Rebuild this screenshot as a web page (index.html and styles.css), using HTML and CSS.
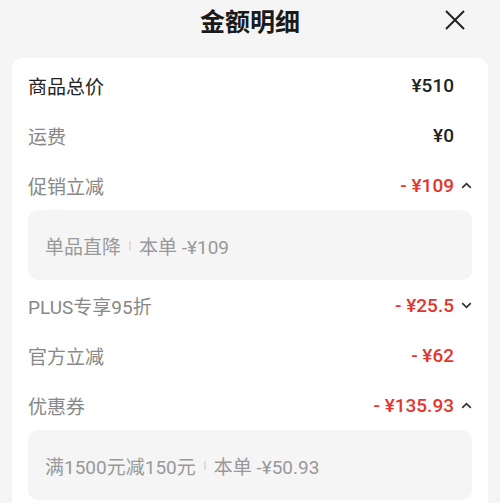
FILE: index.html
```html
<!DOCTYPE html>
<html lang="zh-CN">
  <head>
    <meta charset="UTF-8" />
    <meta name="viewport" content="width=device-width, initial-scale=1.0"/>
    <title>金额明细</title>
    <link rel="stylesheet" href="styles.css">
  </head>
  <body>
    <header class="sheet-header">
      <h1>金额明细</h1>
      <span class="close-btn">
        <svg width="22" height="22" viewBox="0 0 22 22"><path d="M2 2 L20 20 M20 2 L2 20" stroke="#222" stroke-width="2" fill="none"/></svg>
      </span>
    </header>

    <div class="card">
      <div class="row">
        <span class="label strong">商品总价</span>
        <span class="value">¥510</span>
        <span class="arrow"></span>
      </div>
      <div class="row">
        <span class="label">运费</span>
        <span class="value">¥0</span>
        <span class="arrow"></span>
      </div>
      <div class="row">
        <span class="label">促销立减</span>
        <span class="value red">- ¥109</span>
        <span class="arrow">
          <svg width="11" height="7" viewBox="0 0 11 7"><path d="M1.2 5.8 L5.5 1.6 L9.8 5.8" stroke="#333" stroke-width="1.7" fill="none"/></svg>
        </span>
      </div>
      <div class="sub-box">
        <span>单品直降</span><i class="sep"></i><span>本单 -¥109</span>
      </div>
      <div class="row">
        <span class="label">PLUS专享95折</span>
        <span class="value red">- ¥25.5</span>
        <span class="arrow">
          <svg width="11" height="7" viewBox="0 0 11 7"><path d="M1.2 1.2 L5.5 5.4 L9.8 1.2" stroke="#333" stroke-width="1.7" fill="none"/></svg>
        </span>
      </div>
      <div class="row">
        <span class="label">官方立减</span>
        <span class="value red">- ¥62</span>
        <span class="arrow"></span>
      </div>
      <div class="row">
        <span class="label">优惠券</span>
        <span class="value red">- ¥135.93</span>
        <span class="arrow">
          <svg width="11" height="7" viewBox="0 0 11 7"><path d="M1.2 5.8 L5.5 1.6 L9.8 5.8" stroke="#333" stroke-width="1.7" fill="none"/></svg>
        </span>
      </div>
      <div class="sub-box">
        <span>满1500元减150元</span><i class="sep"></i><span>本单 -¥50.93</span>
      </div>
    </div>
  </body>
</html>
```

FILE: styles.css
```css
body {
  margin: 0;
  padding: 0;
  height: 503px;
  background-color: #f5f5f5;
  font-family: Roboto, "Noto Sans CJK SC", sans-serif;
  color: #222;
  overflow: hidden;
}

.sheet-header {
  height: 40px;
  display: flex;
  align-items: center;
  justify-content: center;
  position: relative;
}
.sheet-header h1 {
  margin: 0;
  font-size: 25px;
  font-weight: bold;
  color: #1a1a1a;
}
.close-btn {
  position: absolute;
  right: 34px;
  top: 9px;
  display: flex;
}

.card {
  box-sizing: border-box;
  height: 445px;
  margin: 18px 12px 0;
  padding: 2px 16px 0;
  background-color: white;
  border-radius: 10px 10px 0 0;
}

.row {
  height: 50px;
  display: flex;
  align-items: center;
}
.label {
  flex: 1;
  font-size: 19px;
  color: #888;
}
.label.strong { color: #222; }
.value {
  font-size: 19px;
  font-weight: 500;
  color: #222;
}
.value.red { color: #e4342c; }
.arrow {
  width: 18px;
  display: flex;
  justify-content: flex-end;
}

.sub-box {
  height: 70px;
  background-color: #f5f5f5;
  border-radius: 10px;
  padding: 0 17px;
  display: flex;
  align-items: center;
  font-size: 19px;
  color: #999;
}
.sep {
  display: inline-block;
  width: 2px;
  height: 9px;
  background-color: #ddd;
  margin: 0 8px;
}
```
